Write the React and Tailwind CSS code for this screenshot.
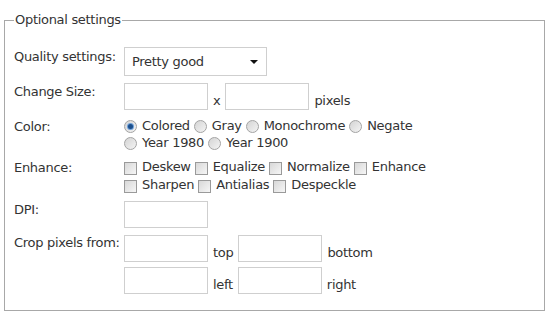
import React from 'react';

function Radio({ checked }) {
  return (
    <span className="inline-block w-[13px] h-[13px] rounded-full border border-[#a3a3a3] bg-gradient-to-br from-[#d4d4d4] to-[#f4f4f4] mr-[5px] relative top-[1px] shrink-0">
      {checked && (
        <span className="absolute left-[3px] top-[3px] w-[5px] h-[5px] rounded-full bg-[#1c4f8c] ring-1 ring-[#6fa0d8]" />
      )}
    </span>
  );
}

function Check() {
  return (
    <span className="inline-block w-[13px] h-[13px] border border-[#9a9a9a] bg-gradient-to-br from-[#d8d8d8] to-[#f6f6f6] mr-[5px] relative top-[1px] shrink-0" />
  );
}

function Field({ className = '' }) {
  return <input type="text" className={`h-[27px] w-[84px] border border-[#cfcfcf] bg-white ${className}`} />;
}

const colors = ['Colored', 'Gray', 'Monochrome', 'Negate'];
const colors2 = ['Year 1980', 'Year 1900'];
const enh = ['Deskew', 'Equalize', 'Normalize', 'Enhance'];
const enh2 = ['Sharpen', 'Antialias', 'Despeckle'];

export default function App() {
  return (
    <div className="w-[550px] h-[313px] bg-white text-[#333] text-[13px] leading-[16px] tracking-[-0.3px] font-['DejaVu_Sans',Verdana,sans-serif] pt-[12px]">
      <fieldset className="ml-[4px] w-[541px] h-[299px] border border-[#a8a8a8] pl-[9px] pt-[19px]">
        <legend className="px-[1px]">Optional settings</legend>

        <div className="grid grid-cols-[110px_1fr] gap-y-[7px] whitespace-nowrap">
          <div className="pt-[2px]">Quality settings:</div>
          <div className="h-[29px] w-[143px] border border-[#cfcfcf] flex items-center justify-between pl-[7px] pr-[8px]">
            <span className="pt-[1px]">Pretty good</span>
            <span className="w-0 h-0 border-l-[4px] border-r-[4px] border-t-[4px] border-l-transparent border-r-transparent border-t-[#111]" />
          </div>

          <div className="pt-[1px]">Change Size:</div>
          <div className="flex items-end">
            <Field />
            <span className="mx-[5px] leading-[18px]">x</span>
            <Field />
            <span className="ml-[5px] leading-[18px]">pixels</span>
          </div>

          <div className="leading-[17px] pt-[1px]">Color:</div>
          <div className="leading-[17px]">
            <div className="flex items-center">
              {colors.map((c, i) => (
                <span key={c} className="inline-flex items-center mr-[4px]">
                  <Radio checked={i === 0} />
                  {c}
                </span>
              ))}
            </div>
            <div className="flex items-center">
              {colors2.map((c) => (
                <span key={c} className="inline-flex items-center mr-[4px]">
                  <Radio />
                  {c}
                </span>
              ))}
            </div>
          </div>

          <div className="leading-[18px] pt-[1px]">Enhance:</div>
          <div className="leading-[18px]">
            <div className="flex items-center">
              {enh.map((c) => (
                <span key={c} className="inline-flex items-center mr-[4px]">
                  <Check />
                  {c}
                </span>
              ))}
            </div>
            <div className="flex items-center">
              {enh2.map((c) => (
                <span key={c} className="inline-flex items-center mr-[4px]">
                  <Check />
                  {c}
                </span>
              ))}
            </div>
          </div>

          <div className="pt-[1px]">DPI:</div>
          <div>
            <Field />
          </div>

          <div>Crop pixels from:</div>
          <div className="flex flex-col gap-[5px]">
            <div className="flex items-end">
              <Field />
              <span className="mx-[5px] leading-[18px]">top</span>
              <Field />
              <span className="ml-[5px] leading-[18px]">bottom</span>
            </div>
            <div className="flex items-end">
              <Field />
              <span className="mx-[5px] leading-[18px]">left</span>
              <Field />
              <span className="ml-[5px] leading-[18px]">right</span>
            </div>
          </div>
        </div>
      </fieldset>
    </div>
  );
}
